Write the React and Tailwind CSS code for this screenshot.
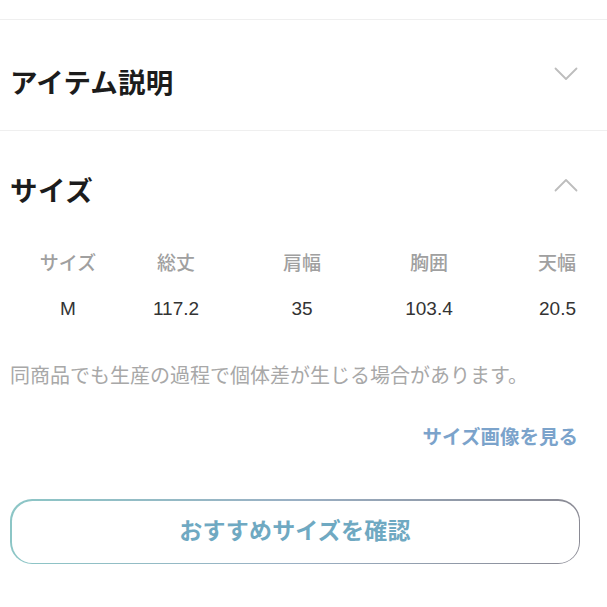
import React from 'react';

const FONT = "font-['Liberation_Sans','Noto_Sans_CJK_JP',sans-serif]";

const cols = [
  { head: 'サイズ', val: 'M', cls: 'w-[116px] text-center' },
  { head: '総丈', val: '117.2', cls: 'w-[100px] text-center' },
  { head: '肩幅', val: '35', cls: 'w-[152px] text-center' },
  { head: '胸囲', val: '103.4', cls: 'w-[102px] text-center' },
  { head: '天幅', val: '20.5', cls: 'flex-1 text-right' },
];

function Chevron({ up }) {
  return (
    <svg width="24" height="14" viewBox="0 0 24 14" fill="none" stroke="#bdbdbd" strokeWidth="1.8" strokeLinecap="round" strokeLinejoin="round">
      {up ? <path d="M1.5 12.5L12 2l10.5 10.5" /> : <path d="M1.5 1.5L12 12l10.5-10.5" />}
    </svg>
  );
}

export default function App() {
  return (
    <div className={`w-[607px] h-[607px] bg-white overflow-hidden ${FONT}`}>
      <div className="h-[20px] border-b border-[#efefef]" />

      {/* Item description */}
      <div className="h-[111px] border-b border-[#efefef] flex items-center justify-between pl-[10px] pr-[29px] pt-[18px]">
        <span className="text-[27.5px] font-bold text-[#1c1c1c] tracking-[0.2px]">アイテム説明</span>
        <div className="mb-[20px]">
          <Chevron />
        </div>
      </div>

      {/* Size */}
      <div className="mt-[41px] h-[40px] flex items-center justify-between pl-[10px] pr-[29px]">
        <span className="text-[27.5px] font-bold text-[#1c1c1c] tracking-[0.5px]">サイズ</span>
        <div className="mb-[14px]">
          <Chevron up />
        </div>
      </div>

      <div className="mt-[37px] pl-[10px] pr-[31px]">
        <div className="flex h-[30px] items-center text-[19px] font-medium text-[#a0a0a0]">
          {cols.map((c) => (
            <div key={c.head} className={c.cls}>{c.head}</div>
          ))}
        </div>
        <div className="flex h-[30px] items-center mt-[15px] text-[19px] text-[#333]">
          {cols.map((c) => (
            <div key={c.head} className={c.cls}>{c.val}</div>
          ))}
        </div>
      </div>

      <div className="mt-[37px] h-[30px] flex items-center pl-[10px] text-[20px] text-[#a8a8a8]">
        同商品でも生産の過程で個体差が生じる場合があります。
      </div>

      <div className="mt-[32px] h-[30px] flex items-center justify-end pr-[29px] text-[19.5px] font-bold text-[#7ba3cb]">
        サイズ画像を見る
      </div>

      <div className="mt-[46px] mx-[10px] w-[570px] h-[65px] rounded-[22px] p-[1.5px] bg-gradient-to-r from-[#8cc6c6] via-[#9ab0c4] to-[#8a8a94]">
        <div className="w-full h-full rounded-[20.5px] bg-white flex items-center justify-center">
          <span className="text-[23px] font-bold text-[#6fa9c2] tracking-[0.2px]">おすすめサイズを確認</span>
        </div>
      </div>
    </div>
  );
}
